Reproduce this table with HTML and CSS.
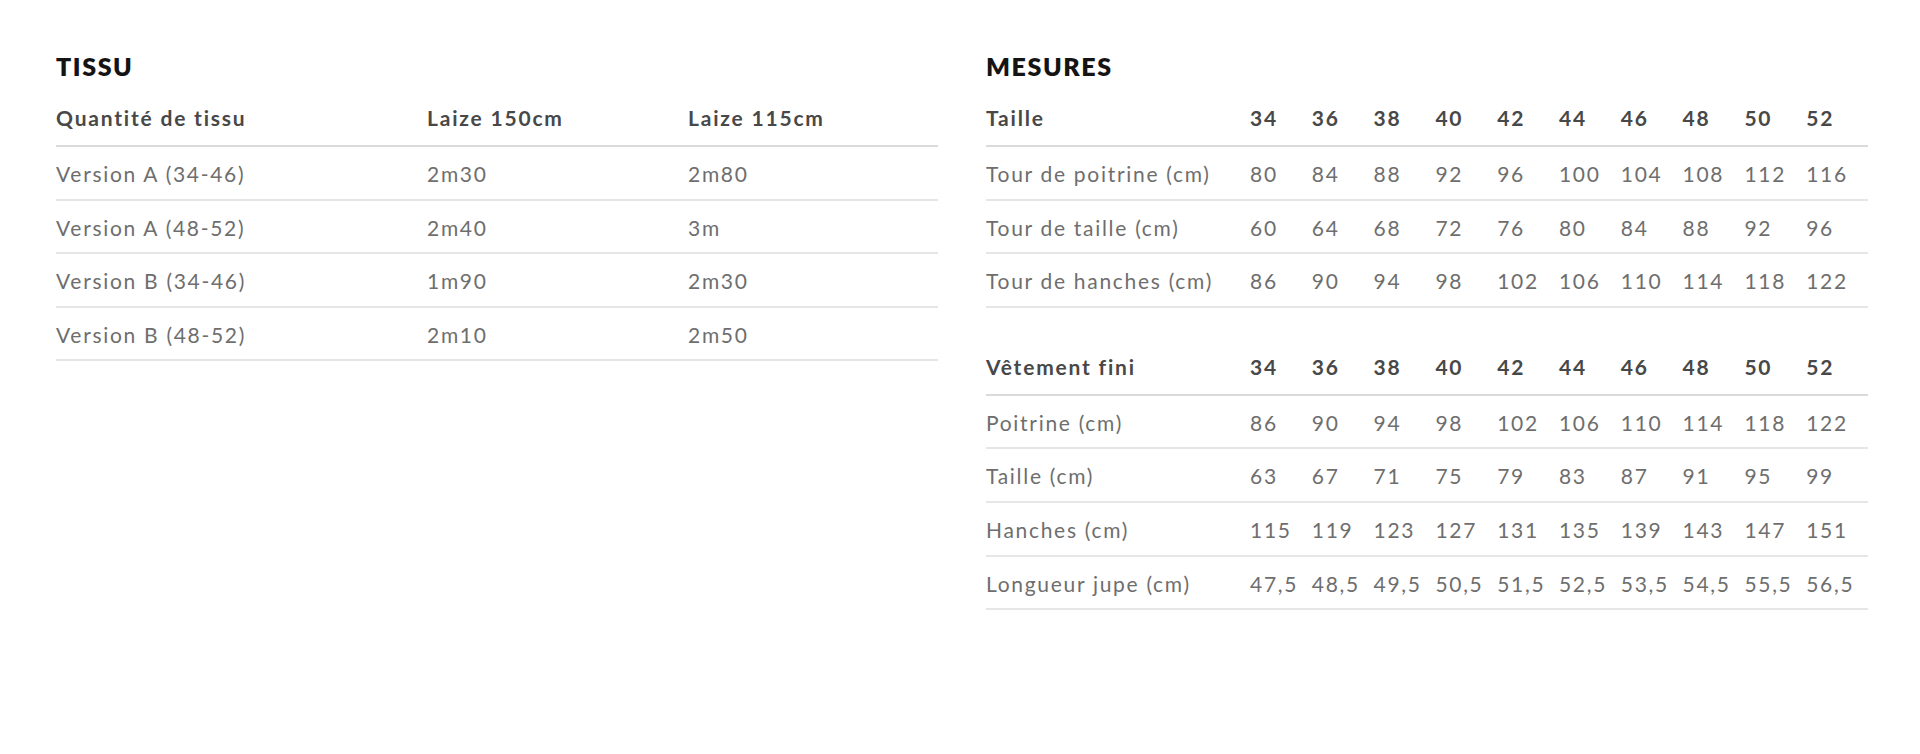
FILE: index.html
```html
<!DOCTYPE html>
<html lang="fr">
<head>
<meta charset="utf-8">
<title>Tissu et mesures</title>
<link rel="stylesheet" href="styles.css">
</head>
<body>
<main class="page">
  <section class="block">
    <h2 class="block-title">TISSU</h2>
    <table class="chart chart-fabric">
      <colgroup><col class="c-fab1"><col class="c-fab2"><col class="c-fab3"></colgroup>
      <thead>
        <tr><th>Quantité de tissu</th><th>Laize 150cm</th><th>Laize 115cm</th></tr>
      </thead>
      <tbody>
        <tr><td>Version A (34-46)</td><td>2m30</td><td>2m80</td></tr>
        <tr><td>Version A (48-52)</td><td>2m40</td><td>3m</td></tr>
        <tr><td>Version B (34-46)</td><td>1m90</td><td>2m30</td></tr>
        <tr><td>Version B (48-52)</td><td>2m10</td><td>2m50</td></tr>
      </tbody>
    </table>
  </section>

  <section class="block">
    <h2 class="block-title">MESURES</h2>
    <table class="chart chart-sizes">
      <colgroup><col class="c-label"><col span="10" class="c-num"></colgroup>
      <thead>
        <tr><th>Taille</th><th>34</th><th>36</th><th>38</th><th>40</th><th>42</th><th>44</th><th>46</th><th>48</th><th>50</th><th>52</th></tr>
      </thead>
      <tbody>
        <tr><td>Tour de poitrine (cm)</td><td>80</td><td>84</td><td>88</td><td>92</td><td>96</td><td>100</td><td>104</td><td>108</td><td>112</td><td>116</td></tr>
        <tr><td>Tour de taille (cm)</td><td>60</td><td>64</td><td>68</td><td>72</td><td>76</td><td>80</td><td>84</td><td>88</td><td>92</td><td>96</td></tr>
        <tr><td>Tour de hanches (cm)</td><td>86</td><td>90</td><td>94</td><td>98</td><td>102</td><td>106</td><td>110</td><td>114</td><td>118</td><td>122</td></tr>
      </tbody>
    </table>

    <table class="chart chart-sizes chart-second">
      <colgroup><col class="c-label"><col span="10" class="c-num"></colgroup>
      <thead>
        <tr><th>Vêtement fini</th><th>34</th><th>36</th><th>38</th><th>40</th><th>42</th><th>44</th><th>46</th><th>48</th><th>50</th><th>52</th></tr>
      </thead>
      <tbody>
        <tr><td>Poitrine (cm)</td><td>86</td><td>90</td><td>94</td><td>98</td><td>102</td><td>106</td><td>110</td><td>114</td><td>118</td><td>122</td></tr>
        <tr><td>Taille (cm)</td><td>63</td><td>67</td><td>71</td><td>75</td><td>79</td><td>83</td><td>87</td><td>91</td><td>95</td><td>99</td></tr>
        <tr><td>Hanches (cm)</td><td>115</td><td>119</td><td>123</td><td>127</td><td>131</td><td>135</td><td>139</td><td>143</td><td>147</td><td>151</td></tr>
        <tr><td>Longueur jupe (cm)</td><td>47,5</td><td>48,5</td><td>49,5</td><td>50,5</td><td>51,5</td><td>52,5</td><td>53,5</td><td>54,5</td><td>55,5</td><td>56,5</td></tr>
      </tbody>
    </table>
  </section>
</main>
</body>
</html>
```

FILE: styles.css
```css
html, body {
  margin: 0;
  padding: 0;
  background: #ffffff;
}

body {
  font-family: Lato, "Open Sans", "Liberation Sans", sans-serif;
  color: #6e6e6e;
}

.page {
  display: grid;
  grid-template-columns: 882px 882px;
  column-gap: 48px;
  padding: 51px 52px 0 56px;
  align-items: start;
}

.block-title {
  margin: 0;
  font-size: 25px;
  line-height: 30px;
  font-weight: 800;
  letter-spacing: 1.6px;
  color: #141414;
}

.chart {
  width: 882px;
  border-collapse: collapse;
  table-layout: fixed;
  font-size: 21px;
  line-height: 25px;
}

.chart th,
.chart td {
  text-align: left;
  padding: 0;
  white-space: nowrap;
}

.chart th {
  font-weight: 700;
  color: #484848;
  letter-spacing: 1.8px;
  padding-top: 24px;
  padding-bottom: 15px;
  border-bottom: 2px solid #dadada;
}

.chart td {
  font-weight: 400;
  color: #6e6e6e;
  letter-spacing: 1.7px;
  padding-top: 14px;
  padding-bottom: 12.6px;
  border-bottom: 2px solid #e6e6e6;
}

.c-fab1 { width: 371px; }
.c-fab2 { width: 261px; }
.c-fab3 { width: 250px; }

.c-label { width: 264px; }
.c-num { width: 61.8px; }

.chart-second {
  margin-top: 22px;
}
```
